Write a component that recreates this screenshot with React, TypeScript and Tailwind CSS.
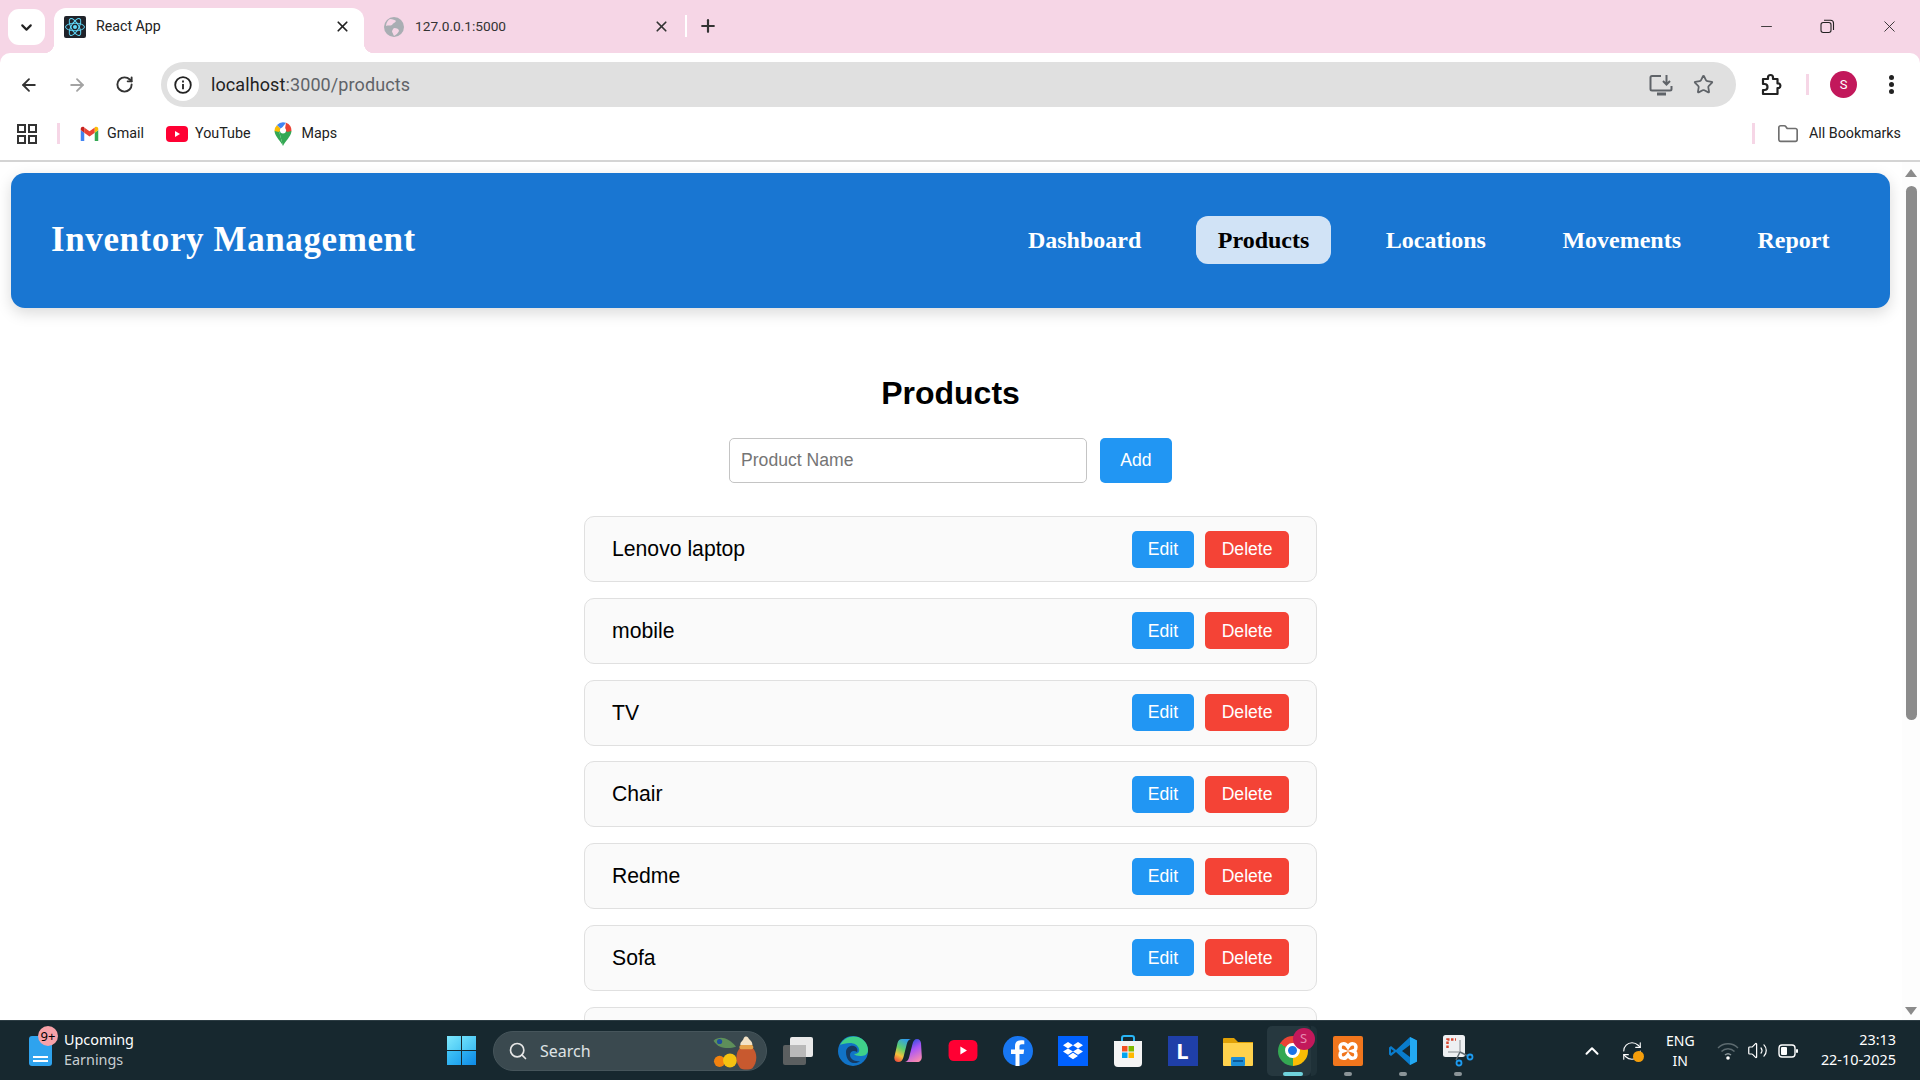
import { ChevronDown, X, Plus, ArrowLeft, ArrowRight, RotateCw, RefreshCw, Star, Minus, Folder, Search, ChevronUp, Volume2 } from 'lucide-react';

const products = ['Lenovo laptop', 'mobile', 'TV', 'Chair', 'Redme', 'Sofa'];
const navLinks = ['Dashboard', 'Products', 'Locations', 'Movements', 'Report'];

function ReactFavicon() {
  return (
    <svg width="22" height="22" viewBox="0 0 22 22">
      <rect width="22" height="22" rx="2" fill="#20232a" />
      <circle cx="11" cy="11" r="2" fill="#61dafb" />
      <g fill="none" stroke="#61dafb" strokeWidth="1">
        <ellipse cx="11" cy="11" rx="9.5" ry="3.8" />
        <ellipse cx="11" cy="11" rx="9.5" ry="3.8" transform="rotate(60 11 11)" />
        <ellipse cx="11" cy="11" rx="9.5" ry="3.8" transform="rotate(120 11 11)" />
      </g>
    </svg>
  );
}

function GlobeIcon() {
  return (
    <svg width="20" height="20" viewBox="0 0 20 20">
      <circle cx="10" cy="10" r="10" fill="#a9aeb3" />
      <path d="M6 2c3 0 5 1 6 2-1 2-3 2-4 4-2 1-4 0-6 1 0-3 2-6 4-7zM10 11c3 0 5 1 5 3-1 2-3 4-5 5-1-2-1-3-2-4 0-2 1-3 2-4z" fill="#f6d6e6" />
    </svg>
  );
}

function TabStrip() {
  return (
    <div className="h-[53px] shrink-0 bg-[#f6d6e6] flex items-start pl-2 pr-[21px]">
      <div className="mt-[9px] w-[37px] h-9 bg-white rounded-[11px] flex items-center justify-center">
        <ChevronDown size={17} strokeWidth={3} className="text-[#222]" />
      </div>
      <div className="relative mt-2 ml-[9px] w-[310px] h-[45px] bg-white rounded-t-[12px] flex items-center pl-[10px] pr-[13px] pb-[8px]">
        <span className="absolute left-[-10px] bottom-0 w-[10px] h-[10px] bg-[radial-gradient(circle_at_0_0,transparent_10px,white_10.5px)]" />
        <span className="absolute right-[-10px] bottom-0 w-[10px] h-[10px] bg-[radial-gradient(circle_at_100%_0,transparent_10px,white_10.5px)]" />
        <ReactFavicon />
        <span className="ml-[10px] text-[14.2px] text-[#222]">React App</span>
        <X size={17} strokeWidth={2.4} className="ml-auto text-[#222]" />
      </div>
      <div className="mt-2 ml-[20px] w-[284px] h-[37px] flex items-center">
        <GlobeIcon />
        <span className="ml-[11px] text-[13.7px] text-[#333]">127.0.0.1:5000</span>
        <X size={17} strokeWidth={2.4} className="ml-auto mr-[-2px] text-[#333]" />
      </div>
      <div className="mt-[15px] ml-[17px] w-[2px] h-[22px] bg-white" />
      <Plus size={20} strokeWidth={2.6} className="mt-4 ml-[11px] text-[#333]" />
      <div className="ml-auto mt-[17px] flex items-center gap-[45px] text-[#222]">
        <Minus size={17} strokeWidth={1.2} />
        <svg width="15" height="15" viewBox="0 0 15 15" fill="none" stroke="currentColor" strokeWidth="1.1">
          <rect x="1" y="3.5" width="10" height="10" rx="2.2" />
          <path d="M4 1.2h6.5a3 3 0 0 1 3 3V11" />
        </svg>
        <X size={19} strokeWidth={1.1} />
      </div>
    </div>
  );
}

function InstallIcon() {
  return (
    <svg width="24" height="22" viewBox="0 0 24 22" fill="none" stroke="#5f6368" strokeWidth="2">
      <path d="M12 2H3a1.5 1.5 0 0 0-1.5 1.5V15A1.5 1.5 0 0 0 3 16.5h18a1.5 1.5 0 0 0 1.5-1.5v-3" />
      <path d="M8 20h9" strokeWidth="3" />
      <path d="M17.5 1v9M14 7l3.5 3.5L21 7" />
    </svg>
  );
}

function PuzzleIcon() {
  return (
    <svg width="24" height="24" viewBox="0 0 24 24" fill="none" stroke="#222" strokeWidth="2.2" strokeLinejoin="round">
      <path d="M4 6h5V4.5a2.5 2.5 0 0 1 5 0V6h4.5v4.5H20a2.5 2.5 0 0 1 0 4.5h-1.500V21H4v-4h1.500a3 3 0 0 0 0-6H4z" />
    </svg>
  );
}

function Toolbar() {
  return (
    <div className="h-[54px] shrink-0 flex items-start bg-white rounded-t-[10px]">
      <div className="w-[161px] h-[45px] mt-[9px] flex items-center pl-[19px] gap-[28px]">
        <ArrowLeft size={20} strokeWidth={2.2} className="text-[#333]" />
        <ArrowRight size={20} strokeWidth={2.2} className="text-[#a3a3a3]" />
        <RotateCw size={19} strokeWidth={2.4} className="text-[#333]" />
      </div>
      <div className="w-[1575px] h-[45px] mt-[9px] bg-[#e0e0e0] rounded-full flex items-center pl-[6px] pr-[22px]">
        <div className="w-8 h-8 rounded-full bg-white flex items-center justify-center">
          <svg width="18" height="18" viewBox="0 0 18 18" fill="none" stroke="#222" strokeWidth="1.8">
            <circle cx="9" cy="9" r="7.8" />
            <path d="M9 8v5.2M9 4.5v2" />
          </svg>
        </div>
        <span className="ml-3 text-[18px] tracking-[0.1px] text-[#222]">
          localhost<span className="text-[#5f6368]">:3000/products</span>
        </span>
        <div className="ml-auto flex items-center gap-[20px]">
          <InstallIcon />
          <Star size={21} strokeWidth={2} className="text-[#5f6368]" />
        </div>
      </div>
      <div className="flex-1 h-[45px] mt-[9px] flex items-center pl-[23px]">
        <PuzzleIcon />
        <div className="ml-[23px] w-[3px] h-[21px] bg-[#f6d6e6]" />
        <div className="ml-[21px] w-[27px] h-[27px] rounded-full bg-[#c2185b] text-white text-[13px] flex items-center justify-center">S</div>
        <div className="ml-[32px] flex flex-col gap-[2px]">
          <span className="w-[5px] h-[5px] rounded-full bg-[#222]" />
          <span className="w-[5px] h-[5px] rounded-full bg-[#222]" />
          <span className="w-[5px] h-[5px] rounded-full bg-[#222]" />
        </div>
      </div>
    </div>
  );
}

function AppsIcon() {
  return (
    <svg width="20" height="20" viewBox="0 0 20 20" fill="none" stroke="#333" strokeWidth="2">
      <rect x="1" y="1" width="7" height="7" />
      <rect x="12" y="1" width="7" height="7" />
      <rect x="1" y="12" width="7" height="7" />
      <rect x="12" y="12" width="7" height="7" />
    </svg>
  );
}

function GmailIcon() {
  return (
    <svg width="21" height="21" viewBox="0 0 24 24">
      <path fill="#4285F4" d="M2 20.5h4V11L2 8z" />
      <path fill="#34A853" d="M18 20.5h4V8l-4 3z" />
      <path fill="#EA4335" d="M6 11V5l6 4.5L18 5v6l-6 4.5z" />
      <path fill="#FBBC04" d="M18 5v6l4-3V6.5c0-1.9-2.1-2.9-3.6-1.8z" />
      <path fill="#C5221F" d="M2 8l4 3V5l-.4-.3C4.1 3.6 2 4.6 2 6.5z" />
    </svg>
  );
}

function YoutubeIcon({ w = 22, h = 16 }: { w?: number; h?: number }) {
  return (
    <svg width={w} height={h} viewBox="0 0 22 16">
      <rect width="22" height="16" rx="4" fill="#ff0033" />
      <path d="M9 5l5 3-5 3z" fill="#fff" />
    </svg>
  );
}

function MapsIcon() {
  return (
    <svg width="18" height="24" viewBox="0 0 18 24">
      <path d="M9 24C7 19 1 15 .5 9 1 8 3 8 5 9l4 15z" fill="#34a853" />
      <path d="M9 24c2-5 8-9 8.5-15L5 9z" fill="#34a853" />
      <path d="M.5 9A8.5 8.5 0 0 1 3 3l4 4-2 3z" fill="#fbbc04" />
      <path d="M3 3a8.5 8.5 0 0 1 9-2.3L7 7z" fill="#4285f4" />
      <path d="M12 .7A8.5 8.5 0 0 1 17.5 9L13 10l-2-3z" fill="#ea4335" />
      <circle cx="9" cy="8.5" r="3" fill="#fff" />
    </svg>
  );
}

function BookmarksBar() {
  return (
    <div className="h-[55px] shrink-0 bg-white border-b-2 border-[#d4d4d4] flex items-center pl-[17px] pr-[19px] text-[14.3px] text-[#222]">
      <AppsIcon />
      <div className="ml-[20px] w-[3px] h-[21px] bg-[#f6d6e6]" />
      <div className="ml-[19px] flex items-center gap-[7px]">
        <GmailIcon />
        <span>Gmail</span>
      </div>
      <div className="ml-[22px] flex items-center gap-[7px]">
        <YoutubeIcon />
        <span>YouTube</span>
      </div>
      <div className="ml-[23px] flex items-center gap-[10px]">
        <MapsIcon />
        <span>Maps</span>
      </div>
      <div className="ml-auto w-[3px] h-[21px] bg-[#f6d6e6]" />
      <Folder size={22} strokeWidth={1.8} className="ml-[22px] text-[#6f6f6f]" />
      <span className="ml-[10px]">All Bookmarks</span>
    </div>
  );
}

function Navbar() {
  return (
    <nav className="h-[135px] bg-[#1976d2] rounded-[14px] pl-10 pr-[39px] flex items-center justify-between shadow-[0_5px_15px_rgba(0,0,0,0.15)] font-['Liberation_Serif',serif] font-bold">
      <h1 className="text-[35px] tracking-[0.6px] text-white">Inventory Management</h1>
      <div className="-mt-px flex items-center gap-[33.5px]">
        {navLinks.map((link) => (
          <a
            key={link}
            className={`h-12 px-[21.5px] rounded-[12px] flex items-center text-[24px] ${
              link === 'Products' ? 'bg-[#d1e3f6] text-black' : 'text-white'
            }`}
          >
            {link}
          </a>
        ))}
      </div>
    </nav>
  );
}

function ProductRow({ name }: { name: string }) {
  return (
    <div className="h-[66px] mb-[15.8px] bg-[#fafafa] border border-[#e0e0e0] rounded-[10px] flex items-center justify-between pl-[27px] pr-[27px]">
      <span className="text-[21.2px] text-black">{name}</span>
      <div className="flex items-center gap-[11px]">
        <button className="h-[37px] px-4 rounded-[5px] bg-[#2196f3] text-white text-[17.6px]">Edit</button>
        <button className="h-[37px] px-[16.5px] rounded-[5px] bg-[#f44336] text-white text-[17.6px]">Delete</button>
      </div>
    </div>
  );
}

function ProductsPage() {
  return (
    <div className="flex-1 min-w-0 pt-[11px] pl-[11px] pr-3 font-['Liberation_Sans',sans-serif]">
      <Navbar />
      <h2 className="mt-[66px] text-center text-[32px] leading-[38px] font-bold text-black">Products</h2>
      <div className="mt-[26px] flex justify-center gap-[13px]">
        <input
          placeholder="Product Name"
          className="w-[358px] h-[45px] px-[11px] bg-white border border-[#c4c4c4] rounded-[5px] text-[17.6px] outline-none placeholder:text-[#757575]"
        />
        <button className="w-[72px] h-[45px] rounded-[5px] bg-[#2196f3] text-white text-[17.6px]">Add</button>
      </div>
      <div className="mt-[33px] w-[733px] mx-auto">
        {products.map((name) => (
          <ProductRow key={name} name={name} />
        ))}
        <div className="h-[66px] bg-[#fafafa] border border-[#e0e0e0] rounded-[10px]" />
      </div>
    </div>
  );
}

function Scrollbar() {
  return (
    <div className="w-[18px] shrink-0 bg-[#fdfdfd] flex flex-col items-center pt-[7px]">
      <span className="w-0 h-0 border-x-[6px] border-x-transparent border-b-[8px] border-b-[#8b8b8b]" />
      <div className="mt-[9px] w-[11px] h-[534px] rounded-full bg-[#8b8b8b]" />
      <span className="mt-auto mb-[5px] w-0 h-0 border-x-[6px] border-x-transparent border-t-[8px] border-t-[#8b8b8b]" />
    </div>
  );
}

function WindowsLogo() {
  return (
    <div className="w-[29px] h-[29px] grid grid-cols-2 gap-[1px]">
      <span className="bg-[linear-gradient(135deg,#7ee8fd,#4cc9f5)]" />
      <span className="bg-[linear-gradient(135deg,#6ddffb,#3dbcf2)]" />
      <span className="bg-[linear-gradient(135deg,#42c4f5,#1ea1ee)]" />
      <span className="bg-[linear-gradient(135deg,#2fb1f1,#0e8ae6)]" />
    </div>
  );
}

function SearchArt() {
  return (
    <svg width="54" height="38" viewBox="0 0 54 44">
      <path d="M1 10C8 4 18 6 27 17 18 20 6 19 1 10z" fill="#5e8f5a" />
      <circle cx="8" cy="11" r="3" fill="#1f4e9e" />
      <circle cx="8" cy="34" r="6.5" fill="#f2820f" />
      <circle cx="20" cy="33" r="8" fill="#f5c211" />
      <path d="M32 18h14c6 6 6 17 0 24-2 2-12 2-14 0-6-7-6-18 0-24z" fill="#c8592f" />
      <rect x="31" y="15" width="16" height="5" rx="2" fill="#e6a24a" />
      <path d="M32 15c0-4 3-4 4-8 2-3 5-2 6 1 2 2 4 3 4 7z" fill="#f3e3c6" />
    </svg>
  );
}

function EdgeIcon() {
  return (
    <svg width="30" height="30" viewBox="0 0 30 30">
      <circle cx="15" cy="15" r="15" fill="#1173c7" />
      <path d="M2 9C5 2 13-1 20 1c6 2 10 7 10 13 0 5-4 6-8 6-3 0-5-1-6-2 4 0 6-2 5-5-1-4-5-6-9-6-4 0-8 1-10 2z" fill="#3fd08a" />
      <path d="M8 16c0-4 4-7 8-6 3 1 4 4 3 6-3-2-7-1-7 3 0 4 5 7 10 6-4 4-14 3-14-9z" fill="#17395f" />
    </svg>
  );
}

function CopilotIcon() {
  return (
    <svg width="28" height="25" viewBox="0 0 28 25">
      <defs>
        <linearGradient id="copilotLeft" x1="0.7" y1="0" x2="0.3" y2="1">
          <stop offset="0" stopColor="#2f9bf0" />
          <stop offset="0.45" stopColor="#5fd06a" />
          <stop offset="0.75" stopColor="#f6c23c" />
          <stop offset="1" stopColor="#ef5a3c" />
        </linearGradient>
        <linearGradient id="copilotRight" x1="0.3" y1="0" x2="0.7" y2="1">
          <stop offset="0" stopColor="#1d4ed8" />
          <stop offset="0.45" stopColor="#a855f7" />
          <stop offset="1" stopColor="#f98ab0" />
        </linearGradient>
      </defs>
      <path d="M8 1h9c-2 .5-3.500 2-4.200 5L9.500 19c-.7 3-2.500 5-5 5-3 0-4.800-2.300-4-5.500L3.500 5C4.200 2.500 5.800 1 8 1z" fill="url(#copilotLeft)" />
      <path d="M20 24h-9c2-.5 3.500-2 4.200-5L18.500 6c.7-3 2-5 4.500-5 2.500 0 3.700 1.700 4 4l.8 13.500c.2 3.500-1.800 5.500-4.300 5.500z" fill="url(#copilotRight)" />
    </svg>
  );
}

function FacebookIcon() {
  return (
    <svg width="30" height="30" viewBox="0 0 30 30">
      <circle cx="15" cy="15" r="15" fill="#1877f2" />
      <path d="M16.5 30V18h4l.7-4.5h-4.700v-3c0-1.400.7-2.300 2.500-2.300h2.300V4.500c-1-.2-2.200-.3-3.300-.3-3.700 0-6 2.100-6 6.100v3.200H8V18h4.500v12z" fill="#fff" />
    </svg>
  );
}

function DropboxIcon() {
  return (
    <svg width="30" height="30" viewBox="0 0 30 30">
      <rect width="30" height="30" fill="#0061fe" />
      <path d="M10 6l5 3.2-5 3.2-5-3.2zM20 6l5 3.2-5 3.2-5-3.2zM5 15.600l5-3.200 5 3.200-5 3.200zM15 15.600l5-3.200 5 3.200-5 3.200zM10 20l5-3.200 5 3.200-5 3.200z" fill="#fff" />
    </svg>
  );
}

function StoreIcon() {
  return (
    <svg width="30" height="32" viewBox="0 0 30 32">
      <path d="M9 7V3a2 2 0 0 1 2-2h8a2 2 0 0 1 2 2v4" fill="none" stroke="#29b6f6" strokeWidth="2" />
      <path d="M1 6h28v22a4 4 0 0 1-4 4H5a4 4 0 0 1-4-4z" fill="#f4f4f4" />
      <rect x="9" y="11" width="5.5" height="5.5" fill="#f25022" />
      <rect x="15.5" y="11" width="5.5" height="5.5" fill="#7fba00" />
      <rect x="9" y="17.5" width="5.5" height="5.5" fill="#00a4ef" />
      <rect x="15.5" y="17.5" width="5.5" height="5.5" fill="#ffb900" />
    </svg>
  );
}

function ExplorerIcon() {
  return (
    <svg width="30" height="30" viewBox="0 0 30 30">
      <path d="M0 3a1 1 0 0 1 1-1h10l4 4h15v8H0z" fill="#e0a106" />
      <path d="M0 7h30v22a1 1 0 0 1-1 1H1a1 1 0 0 1-1-1z" fill="#ffd24d" />
      <rect x="8" y="21" width="14" height="9" rx="1" fill="#1d8fd8" />
      <rect x="10" y="24" width="10" height="2" fill="#0a5a9a" />
    </svg>
  );
}

function ChromeIcon() {
  return (
    <div className="relative w-[30px] h-[30px] rounded-full bg-[conic-gradient(from_-60deg,#ea4335_0_120deg,#fbbc04_120deg_240deg,#34a853_240deg_360deg)] flex items-center justify-center">
      <span className="w-[15px] h-[15px] rounded-full bg-[#1a73e8] border-[3px] border-white" />
      <span className="absolute -top-[8px] -right-[7px] w-[22px] h-[22px] rounded-full bg-[#c2185b] text-[#e88bb0] text-[13px] flex items-center justify-center">S</span>
    </div>
  );
}

function XamppIcon() {
  return (
    <svg width="30" height="30" viewBox="0 0 30 30">
      <rect width="30" height="30" rx="2" fill="#f1761d" />
      <path d="M9 8c2.500-1 4.500.5 6 3 1.500-2.500 3.500-4 6-3 2.500 1 2.500 5 .5 6.500L20 15l1.500.5c2 1.500 2 5.500-.5 6.500-2.500 1-4.500-.5-6-3-1.500 2.500-3.500 4-6 3-2.500-1-2.500-5-.5-6.500L10 15l-1.500-.5C6.500 13 6.500 9 9 8z" fill="none" stroke="#fff" strokeWidth="3.5" />
    </svg>
  );
}

function VscodeIcon() {
  return (
    <svg width="30" height="30" viewBox="0 0 30 30">
      <path d="M22 1l7 3.5v21L22 29 8 16l-5 4-2-1.500v-7L3 10l5 4z" fill="#0a7ccc" />
      <path d="M22 1l7 3.5v21L22 29z" fill="#23a9f2" />
      <path d="M22 9l-8 6 8 6z" fill="#17282f" />
      <path d="M3 13l3 2-3 2z" fill="#17282f" />
    </svg>
  );
}

function SnipIcon() {
  return (
    <svg width="32" height="32" viewBox="0 0 32 32">
      <rect x="1" y="0" width="22" height="22" rx="2.5" fill="#eef0f2" />
      <path d="M5.500 13V4.500H14" fill="none" stroke="#d8452f" strokeWidth="2.500" strokeDasharray="2.500 1.500" />
      <path d="M6 17h12V5" fill="none" stroke="#a9adb1" strokeWidth="1.500" />
      <path d="M18 17l8 4M18 17l-4 8" stroke="#5f6a70" strokeWidth="1.500" />
      <circle cx="28" cy="22" r="2.500" fill="none" stroke="#1d9bf0" strokeWidth="1.800" />
      <circle cx="17" cy="28" r="2.500" fill="none" stroke="#1d9bf0" strokeWidth="1.800" />
    </svg>
  );
}

function TaskIcon({ children, running, active }: { children: React.ReactNode; running?: boolean; active?: boolean }) {
  return (
    <div className="relative w-[55px] h-[50px] flex items-center justify-center">
      {active && (
        <>
          <span className="absolute left-[46px] top-0 bottom-0 w-[6px] rounded-r-[5px] bg-[#1f3138]" />
          <span className="absolute left-[2px] top-0 bottom-0 w-[44px] rounded-[5px] bg-[#26383f]" />
        </>
      )}
      {children}
      {running && (
        <span className={`absolute bottom-0 h-1 rounded-full ${active ? 'w-5 bg-[#6fd3dc]' : 'w-2 bg-[#8b9498]'}`} />
      )}
    </div>
  );
}

function Taskbar() {
  return (
    <div className="h-[60px] shrink-0 bg-[#17282f] border-t border-[#2c3c43] flex items-center font-['Noto_Sans',sans-serif] text-white">
      <div className="w-[447px] shrink-0 pl-[29px] flex items-center">
        <div className="relative w-[23px] h-[30px] rounded-[3px] bg-[#2ea3ee] flex flex-col justify-end gap-[2px] px-1 pb-1">
          <span className="h-[2px] bg-white" />
          <span className="h-[2px] bg-white" />
          <span className="absolute -top-[10px] left-[9px] w-5 h-5 rounded-full bg-[#f7a1a8] text-black text-[13px] leading-5 text-center">9+</span>
        </div>
        <div className="ml-3 -mt-px text-[14.4px] leading-[20px]">
          <div>Upcoming</div>
          <div className="text-[#c8cfd2]">Earnings</div>
        </div>
      </div>
      <WindowsLogo />
      <div className="ml-[17px] w-[274px] h-10 rounded-full bg-[#3a494f] border border-[#46555b] flex items-center pl-[14px] pr-[3px]">
        <Search size={20} strokeWidth={2} className="text-[#e6e6e6]" />
        <span className="ml-[12px] text-[16px] text-[#dfe3e5]">Search</span>
        <div className="ml-auto">
          <SearchArt />
        </div>
      </div>
      <div className="ml-[3px] flex items-center">
        <TaskIcon>
          <div className="relative w-[30px] h-[28px]">
            <span className="absolute left-0 bottom-0 w-[23px] h-[20px] bg-[#5b5f60] rounded-[2px]" />
            <span className="absolute right-0 top-0 w-[23px] h-[20px] bg-[#e9e9e9] rounded-[2px]" />
            <span className="absolute left-[7px] top-[8px] w-4 h-3 bg-[#b9b9b9]" />
          </div>
        </TaskIcon>
        <TaskIcon><EdgeIcon /></TaskIcon>
        <TaskIcon><CopilotIcon /></TaskIcon>
        <TaskIcon><YoutubeIcon w={30} h={21} /></TaskIcon>
        <TaskIcon><FacebookIcon /></TaskIcon>
        <TaskIcon><DropboxIcon /></TaskIcon>
        <TaskIcon><StoreIcon /></TaskIcon>
        <TaskIcon>
          <div className="w-[30px] h-[30px] bg-[#1f3fa8] text-white text-[22px] font-bold flex items-center justify-center">L</div>
        </TaskIcon>
        <TaskIcon><ExplorerIcon /></TaskIcon>
        <TaskIcon running active><ChromeIcon /></TaskIcon>
        <TaskIcon running><XamppIcon /></TaskIcon>
        <TaskIcon running><VscodeIcon /></TaskIcon>
        <TaskIcon running><SnipIcon /></TaskIcon>
      </div>
      <div className="flex-1 flex items-center pl-[96px] pr-[24px]">
        <ChevronUp size={22} strokeWidth={2.2} />
        <div className="relative ml-[18px] w-[22px] h-[22px]">
          <RefreshCw size={22} strokeWidth={1.2} />
          <span className="absolute right-[-1px] bottom-0 w-[11px] h-[11px] rounded-full bg-[#f59e0b]" />
        </div>
        <div className="ml-[23px] text-[14px] leading-[20px] text-center">
          <div>ENG</div>
          <div>IN</div>
        </div>
        <svg className="ml-[22px]" width="22" height="18" viewBox="0 0 22 18" fill="none" stroke="#5d6b70" strokeWidth="1.4">
          <path d="M1 6a14 14 0 0 1 20 0M4.5 9.5a9 9 0 0 1 13 0" />
          <path d="M8 13a4.5 4.5 0 0 1 6 0" stroke="#8b979b" />
          <circle cx="11" cy="16" r="1.8" fill="#fff" stroke="none" />
        </svg>
        <Volume2 size={21} strokeWidth={1.4} className="ml-[8px]" />
        <svg className="ml-[10px]" width="20" height="14" viewBox="0 0 20 14">
          <rect x="1" y="1" width="16" height="12" rx="3" fill="none" stroke="#fff" strokeWidth="1.4" />
          <rect x="3" y="3" width="6" height="8" rx="1" fill="#fff" />
          <rect x="18" y="5" width="2" height="4" rx="1" fill="#fff" />
        </svg>
        <div className="ml-auto -mt-px text-[14.4px] leading-[20px] text-right">
          <div>23:13</div>
          <div>22-10-2025</div>
        </div>
      </div>
    </div>
  );
}

export default function App() {
  return (
    <div className="w-[1920px] h-[1080px] overflow-hidden flex flex-col bg-[#f6d6e6] font-['Roboto',sans-serif]">
      <TabStrip />
      <Toolbar />
      <BookmarksBar />
      <main className="flex-1 min-h-0 overflow-hidden flex bg-white">
        <ProductsPage />
        <Scrollbar />
      </main>
      <Taskbar />
    </div>
  );
}
